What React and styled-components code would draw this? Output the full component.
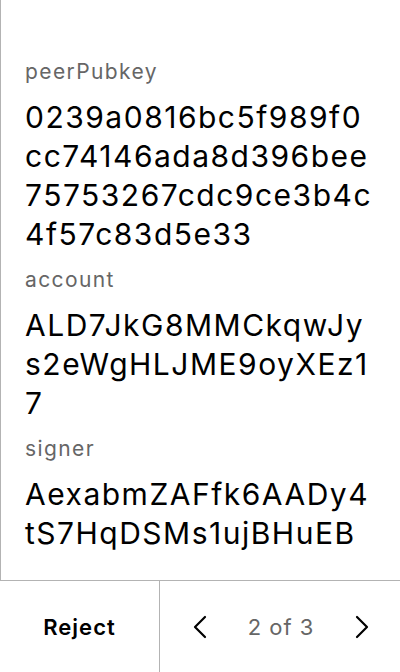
import React from "react";
import styled, { createGlobalStyle } from "styled-components";

const Global = createGlobalStyle`
  html, body { margin: 0; padding: 0; background: #fff; }
  body { font-family: Inter, "Noto Sans", sans-serif; }
  * { box-sizing: border-box; }
`;

const Screen = styled.div`
  width: 400px;
  height: 672px;
  display: flex;
  flex-direction: column;
  background: #fff;
`;

const Body = styled.div`
  flex: 1;
  border-left: 1px solid #b3b3b3;
  padding: 58px 22px 0 24px;
  display: flex;
  flex-direction: column;
  gap: 12px;
  overflow: hidden;
`;

const Field = styled.div`
  display: flex;
  flex-direction: column;
  gap: 12px;
`;

const Label = styled.div`
  font-size: 21px;
  line-height: 28px;
  letter-spacing: 1.4px;
  color: #666;
`;

const Value = styled.div`
  font-size: 30px;
  line-height: 39px;
  letter-spacing: 1.5px;
  color: #000;
  word-break: break-all;
`;

const Footer = styled.div`
  height: 92px;
  border-top: 1px solid #b3b3b3;
  display: grid;
  grid-template-columns: 160px 1fr;
`;

const RejectButton = styled.button`
  border: none;
  border-right: 1px solid #b3b3b3;
  background: none;
  font-family: inherit;
  font-size: 22px;
  font-weight: 600;
  letter-spacing: 1px;
  color: #000;
  padding: 0;
`;

const Pager = styled.div`
  display: flex;
  align-items: center;
  justify-content: space-between;
  padding: 0 26px 0 28px;
`;

const NavButton = styled.button`
  border: none;
  background: none;
  padding: 0;
  width: 24px;
  height: 24px;
  display: flex;
  align-items: center;
  justify-content: center;
`;

const PageText = styled.span`
  font-size: 22px;
  letter-spacing: 1px;
  color: #666;
`;

const Chevron = ({ dir }) => (
  <svg width="14" height="24" viewBox="0 0 14 24" fill="none">
    <path
      d={dir === "left" ? "M12 2 L2 12 L12 22" : "M2 2 L12 12 L2 22"}
      stroke="#000"
      strokeWidth="2.2"
      strokeLinecap="round"
      strokeLinejoin="round"
    />
  </svg>
);

const fields = [
  { label: "peerPubkey", value: "0239a0816bc5f989f0cc74146ada8d396bee75753267cdc9ce3b4c4f57c83d5e33" },
  { label: "account", value: "ALD7JkG8MMCkqwJys2eWgHLJME9oyXEz17" },
  { label: "signer", value: "AexabmZAFfk6AADy4tS7HqDSMs1ujBHuEB" },
];

export default function App() {
  return (
    <>
      <Global />
      <Screen>
        <Body>
          {fields.map((f) => (
            <Field key={f.label}>
              <Label>{f.label}</Label>
              <Value>{f.value}</Value>
            </Field>
          ))}
        </Body>
        <Footer>
          <RejectButton>Reject</RejectButton>
          <Pager>
            <NavButton><Chevron dir="left" /></NavButton>
            <PageText>2 of 3</PageText>
            <NavButton><Chevron dir="right" /></NavButton>
          </Pager>
        </Footer>
      </Screen>
    </>
  );
}
